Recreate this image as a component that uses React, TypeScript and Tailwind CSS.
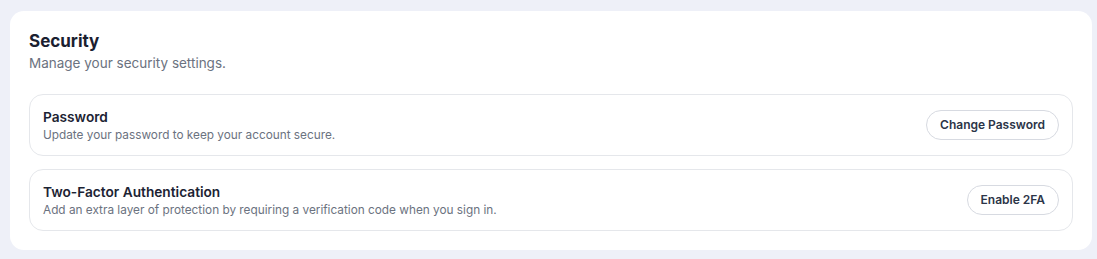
import React from "react";

function Row({ title, desc, action }: { title: string; desc: string; action: string }) {
  return (
    <div className="flex items-center justify-between rounded-[14px] border border-[#e5e7eb] px-[13px] py-3">
      <div className="flex flex-col">
        <div className="text-[13.7px] leading-5 font-semibold text-[#1c2333]">{title}</div>
        <div className="text-[11.8px] leading-4 text-[#6b7280]">{desc}</div>
      </div>
      <button className="h-[30px] rounded-full border border-[#d7dae1] bg-white px-[13px] text-[12px] font-semibold text-[#2c3548]">
        {action}
      </button>
    </div>
  );
}

export default function App() {
  return (
    <div
      className="min-h-[259px] w-[1097px] bg-[#eef0f8] pl-[10px] pt-[11px] pb-[9px]"
      style={{ fontFamily: "Inter, 'Noto Sans', sans-serif" }}
    >
      <div className="w-[1082px] rounded-[14px] bg-white px-[19px] pt-[19px] pb-[19px]">
        <div className="text-[17px] leading-[22px] font-bold text-[#1a2030]">Security</div>
        <div className="mt-px text-[13.5px] leading-5 text-[#6b7280]">Manage your security settings.</div>
        <div className="mt-[21px] flex flex-col gap-[13px]">
          <Row
            title="Password"
            desc="Update your password to keep your account secure."
            action="Change Password"
          />
          <Row
            title="Two-Factor Authentication"
            desc="Add an extra layer of protection by requiring a verification code when you sign in."
            action="Enable 2FA"
          />
        </div>
      </div>
    </div>
  );
}
